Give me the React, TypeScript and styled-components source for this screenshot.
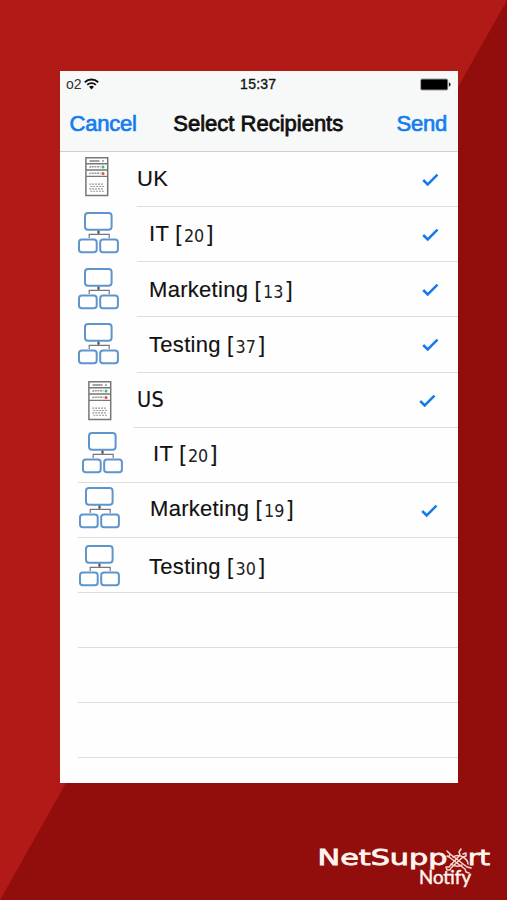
import React from "react";
import styled, { createGlobalStyle } from "styled-components";

const Global = createGlobalStyle`
  *, *::before, *::after { box-sizing: border-box; }
  body { margin: 0; font-family: "Liberation Sans", Arial, sans-serif; color: #111; }
`;

const Backdrop = styled.div`
  width: 507px;
  height: 900px;
  padding: 71px 49.5px 0 60px;
  background: linear-gradient(to bottom right, #b21a18 49.95%, #920e0c 50.05%);
  overflow: hidden;
`;

const Screen = styled.main`
  height: 711.5px;
  background: #fefefe;
  overflow: hidden;
`;

const Header = styled.header`
  height: 81px;
  background: #f7f8f8;
  border-bottom: 1px solid #cfd0d0;
`;

const StatusBar = styled.div`
  height: 26px;
  display: grid;
  grid-template-columns: 1fr auto 1fr;
  align-items: center;
  padding: 0 7px 0 6px;
  font-size: 14px;
  line-height: 16px;
`;

const Carrier = styled.span`
  display: flex;
  align-items: center;
  gap: 2px;
  color: #333;
`;

const Clock = styled.span`
  letter-spacing: 0.25px;
  -webkit-text-stroke: 0.35px #111;
`;

const BatteryIcon = styled.svg`
  justify-self: end;
`;

const NavBar = styled.nav`
  height: 53px;
  display: grid;
  grid-template-columns: 1fr auto 1fr;
  align-items: center;
  padding: 0 10.5px 0 9.5px;
  font-size: 22px;
  line-height: 26px;
`;

const NavButton = styled.button<{ $end?: boolean }>`
  justify-self: ${(p) => (p.$end ? "end" : "start")};
  padding: 0;
  border: 0;
  background: none;
  font: inherit;
  color: #147df0;
  letter-spacing: -0.2px;
  -webkit-text-stroke: 0.7px #147df0;
`;

const Title = styled.h1`
  margin: 0;
  font-size: 22px;
  font-weight: 400;
  -webkit-text-stroke: 0.8px #111;
`;

const List = styled.ul`
  list-style: none;
  margin: 0;
  padding: 0;
`;

const Item = styled.li<{ $inset: number }>`
  height: 55.13px;
  display: flex;
  flex-direction: column;
  &::after {
    content: "";
    flex: none;
    height: 1px;
    margin-left: ${(p) => p.$inset}px;
    background: #dcdddd;
  }
`;

const ItemBody = styled.div`
  flex: 1;
  min-height: 0;
  display: flex;
  align-items: flex-start;
`;

const IconCell = styled.div<{ $x: number; $y: number }>`
  flex: none;
  width: 77px;
  padding: ${(p) => p.$y}px 0 0 ${(p) => p.$x}px;
  svg { display: block; }
`;

const Label = styled.div<{ $indent: number; $y: number }>`
  flex: 1;
  padding: ${(p) => p.$y}px 0 0 ${(p) => p.$indent}px;
  font-size: 22px;
  line-height: 26px;
  white-space: pre;
  -webkit-text-stroke: 0.15px #111;
`;

const Name = styled.span<{ $humanist?: boolean }>`
  letter-spacing: ${(p) => (p.$humanist ? 0.3 : 0.3)}px;
  ${(p) =>
    p.$humanist &&
    `font-family: "DejaVu Sans Condensed", "DejaVu Sans", sans-serif;
     font-stretch: condensed;
     font-size: 21.5px;`}
`;

const Count = styled.span`
  vertical-align: -1px;
  line-height: 1;
  font-family: "DejaVu Sans Condensed", "DejaVu Sans", sans-serif;
  font-stretch: condensed;
  font-size: 17.8px;
  color: #222;
  margin: 0 3px 0 2.5px;
  -webkit-text-stroke: 0;
`;

const CheckCell = styled.div<{ $right: number; $y: number }>`
  padding: ${(p) => p.$y}px ${(p) => p.$right}px 0 0;
  svg { display: block; }
`;

const Brand = styled.footer`
  margin: 63px -33px 0 0;
  display: flex;
  flex-direction: column;
  align-items: flex-end;
`;

const Wifi = () => (
  <svg width="15" height="12" viewBox="0 0 15 12" fill="none" stroke="#111" strokeWidth="1.9">
    <path d="M.8 4.2a9.7 9.7 0 0 1 13.4 0M3.2 6.9a6.2 6.2 0 0 1 8.6 0" />
    <path d="M7.5 11.4 5 8.8a3.7 3.7 0 0 1 5 0z" fill="#111" stroke="none" />
  </svg>
);

const Battery = () => (
  <BatteryIcon width="31" height="13" viewBox="0 0 31 13">
    <rect x=".2" y=".5" width="28" height="12" rx="2" fill="#999" />
    <rect x="1.1" y="1.4" width="26.2" height="10.2" rx="1.2" fill="#000" />
    <path d="M28.9 4.3q1.8.7 1.8 2.2t-1.8 2.2z" fill="#222" />
  </BatteryIcon>
);

const Server = () => (
  <svg width="24" height="40" viewBox="0 0 24 40" fill="none">
    <path d="M.9.8h21.8v37.8H.9z" stroke="#777" strokeWidth="1.5" />
    <path d="M1 6.7h21.5M1 13h21.5M1 19.4h21.5" stroke="#777" strokeWidth="1.4" />
    <path d="M4.5 4h10" stroke="#666" strokeWidth="1.2" />
    <path d="m4.5 10.6 1-.8h10M4.5 17l1-.8h10" stroke="#999" strokeWidth="1.6" strokeDasharray="2 .6" />
    <path d="M4.3 27.1h14M5.3 29.5h14M4.3 31.9h14M5.3 34.3h14" stroke="#999" strokeWidth="1.1" strokeDasharray="2 .9" />
    <circle cx="18" cy="4" r="1" fill="#999" />
    <circle cx="18" cy="10" r="1.5" fill="#45b58d" />
    <circle cx="18" cy="16.4" r="1.5" fill="#de5145" />
  </svg>
);

const Network = () => (
  <svg width="41" height="42" viewBox="0 0 41 42" fill="none">
    <path d="M20.5 18v4.2M11.2 26v-3.6h20V26" stroke="#777" strokeWidth="1.2" />
    <path d="M19.4 18.5h2.2v3h-2.2z" fill="#555" />
    <g stroke="#5f95cd" strokeWidth="2" fill="#fff">
      <rect x="7" y="1" width="26.6" height="16.7" rx="3" />
      <rect x="1" y="27.5" width="17.7" height="12.8" rx="2.8" />
      <rect x="22.2" y="27.5" width="17.7" height="12.8" rx="2.8" />
    </g>
  </svg>
);

const Check = () => (
  <svg width="17" height="14" viewBox="0 0 17 14" fill="none">
    <path d="m1.2 7 4.5 4.5L15.5 1.6" stroke="#147be8" strokeWidth="2.5" />
  </svg>
);

const Logo = () => (
  <svg width="174" height="44" viewBox="0 0 174 44" fill="#fff5ef">
    <g fontFamily="DejaVu Sans" fontSize="21" stroke="#fff5ef" strokeWidth=".8">
      <text x="0.5" y="19.3" textLength="130" lengthAdjust="spacingAndGlyphs">NetSupp</text>
      <text x="151" y="19.3" textLength="22" lengthAdjust="spacingAndGlyphs">rt</text>
    </g>
    <text x="102" y="37.6" fontFamily="Lato" fontSize="18.5" stroke="#fff5ef" strokeWidth=".45" textLength="52" lengthAdjust="spacingAndGlyphs">Notify</text>
    <g fill="none" stroke="#f7d9d0" strokeWidth="1.5" strokeLinecap="round" strokeLinejoin="round">
      <path d="m130 5 3 3-1 3-2-1M133 8l17 13 4 1M132 11l16 12 1 3 3 1" />
      <path d="m144 3-2 3 1 3-11 12-3 0 1 3 3 0 1-2 12-11 3-1 0-3-3 1" />
      <path d="M136 11q5-3 10 0t5 7M134 18q5 4 11 1" />
    </g>
  </svg>
);

type Entry = {
  name: string;
  humanist?: boolean;
  count?: number;
  checked?: boolean;
  iconX: number;
  iconY: number;
  indent: number;
  textY: number;
  inset: number;
  checkRight?: number;
};

const entries: Entry[] = [
  { name: "UK", checked: true, iconX: 25, iconY: 5, indent: 0, textY: 14, inset: 77 },
  { name: "IT", count: 20, checked: true, iconX: 18, iconY: 5, indent: 12, textY: 14, inset: 77 },
  { name: "Marketing", count: 13, checked: true, iconX: 18, iconY: 5.5, indent: 12, textY: 14.5, inset: 77 },
  { name: "Testing", count: 37, checked: true, iconX: 18, iconY: 5.5, indent: 12, textY: 14.5, inset: 77 },
  { name: "US", humanist: true, checked: true, iconX: 28, iconY: 8, indent: 0, textY: 14, inset: 74, checkRight: 22 },
  { name: "IT", count: 20, iconX: 21.5, iconY: 4, indent: 16, textY: 13, inset: 18 },
  { name: "Marketing", count: 19, checked: true, iconX: 19, iconY: 4, indent: 13, textY: 13, inset: 18, checkRight: 20 },
  { name: "Testing", count: 30, iconX: 18.5, iconY: 7, indent: 12, textY: 16, inset: 18 },
];

const emptyRows = [0, 1, 2];

export default function App() {
  return (
    <>
      <Global />
      <Backdrop>
        <Screen>
          <Header>
            <StatusBar>
              <Carrier>o2<Wifi /></Carrier>
              <Clock>15:37</Clock>
              <Battery />
            </StatusBar>
            <NavBar>
              <NavButton>Cancel</NavButton>
              <Title>Select Recipients</Title>
              <NavButton $end>Send</NavButton>
            </NavBar>
          </Header>
          <List>
            {entries.map((e, i) => (
              <Item key={i} $inset={e.inset}>
                <ItemBody>
                  <IconCell $x={e.iconX} $y={e.iconY}>
                    {e.count === undefined ? <Server /> : <Network />}
                  </IconCell>
                  <Label $indent={e.indent} $y={e.textY}>
                    <Name $humanist={e.humanist}>{e.name}</Name>
                    {e.count !== undefined && <> [<Count>{e.count}</Count>]</>}
                  </Label>
                  {e.checked && (
                    <CheckCell $right={e.checkRight ?? 19} $y={21}><Check /></CheckCell>
                  )}
                </ItemBody>
              </Item>
            ))}
            {emptyRows.map((n) => (
              <Item key={n} $inset={18}><ItemBody /></Item>
            ))}
          </List>
        </Screen>
        <Brand><Logo /></Brand>
      </Backdrop>
    </>
  );
}
